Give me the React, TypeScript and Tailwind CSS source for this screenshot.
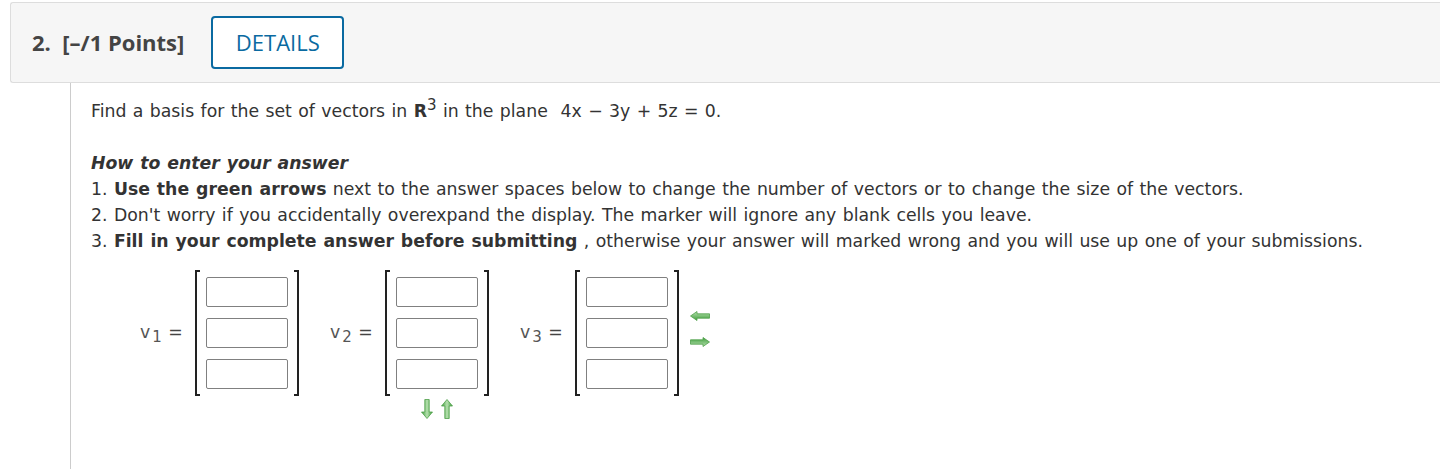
import React from 'react'

const body = { fontFamily: '"DejaVu Sans", Verdana, sans-serif' }
const head = { fontFamily: '"Open Sans", "Segoe UI", sans-serif' }

function ArrowH({ dir }: { dir: 'left' | 'right' }) {
  return (
    <svg width="20" height="10" viewBox="0 0 20 10" className={dir === 'left' ? '' : 'rotate-180'}>
      <defs>
        <linearGradient id={`gh-${dir}`} x1="0" y1="0" x2="0" y2="1">
          <stop offset="0" stopColor="#b5e0ae" />
          <stop offset="1" stopColor="#3f9e3c" />
        </linearGradient>
      </defs>
      <path d="M0.5 5 L7 0.5 L7 2.8 L19.5 2.8 L19.5 7.2 L7 7.2 L7 9.5 Z" fill={`url(#gh-${dir})`} stroke="#4f9f4a" strokeWidth="0.8" />
    </svg>
  )
}

function ArrowV({ dir }: { dir: 'up' | 'down' }) {
  return (
    <svg width="12" height="20" viewBox="0 0 12 20" className={dir === 'up' ? '' : 'rotate-180'}>
      <defs>
        <linearGradient id={`gv-${dir}`} x1="0" y1="0" x2="1" y2="0">
          <stop offset="0" stopColor="#3f9e3c" />
          <stop offset="0.5" stopColor="#b5e0ae" />
          <stop offset="1" stopColor="#3f9e3c" />
        </linearGradient>
      </defs>
      <path d="M6 0.5 L11.5 7 L8.2 7 L8.2 19.5 L3.8 19.5 L3.8 7 L0.5 7 Z" fill={`url(#gv-${dir})`} stroke="#4f9f4a" strokeWidth="0.8" />
    </svg>
  )
}

function Vector({ n }: { n: number }) {
  return (
    <div className="flex items-center">
      <div className="w-[55px] text-[17.3px] text-[#555] leading-none whitespace-nowrap" style={body}>
        v<span className="relative top-[4px] text-[15px] ml-[2px]">{n}</span> <span className="text-[#444]">=</span>
      </div>
      <div className="relative flex flex-col gap-[11px] px-[9px] py-[5px] border-2 border-[#222] w-[104px]">
        <div className="absolute left-[3px] right-[3px] -top-[2px] h-[2px] bg-white" />
        <div className="absolute left-[3px] right-[3px] -bottom-[2px] h-[2px] bg-white" />
        {[0, 1, 2].map((i) => (
          <div key={i} className="w-[82px] h-[30px] border border-[#808080] rounded-[2px] bg-white" />
        ))}
      </div>
    </div>
  )
}

export default function App() {
  return (
    <div className="w-full h-[469px] bg-white overflow-hidden pt-[2px]">
      <div className="ml-[10px] h-[81px] flex items-center border border-r-0 border-[#ddd] rounded-l-[3px] bg-[#f6f6f6]">
        <div className="pl-[21px] text-[22px] font-bold text-[#444]" style={head}>
          2.&nbsp; [–/1 Points]
        </div>
        <div
          className="ml-[27px] w-[133px] h-[53px] flex items-center justify-center border-2 border-[#0a6aa1] rounded-[4px] bg-white text-[22px] text-[#0a6aa1]"
          style={head}
        >
          DETAILS
        </div>
      </div>
      <div
        className="ml-[70px] h-[386px] border-l border-[#ccc] pl-[20px] pt-[16px] text-[#333] text-[17.3px] [word-spacing:0.9px]"
        style={body}
      >
        <p className="leading-[24px]">
          Find a basis for the set of vectors in <b>R</b>
          <span className="relative -top-[7px] text-[15px]">3</span> in the plane&nbsp; 4x − 3y + 5z = 0.
        </p>
        <div className="mt-[26px] leading-[26px]">
          <p className="font-bold italic">How to enter your answer</p>
          <p>
            1. <b>Use the green arrows</b> next to the answer spaces below to change the number of vectors or to change the size of the vectors.
          </p>
          <p>2. Don't worry if you accidentally overexpand the display. The marker will ignore any blank cells you leave.</p>
          <p>
            3. <b>Fill in your complete answer before submitting</b> , otherwise your answer will marked wrong and you will use up one of your submissions.
          </p>
        </div>
        <div className="mt-[16px] ml-[49px] flex items-start">
          <Vector n={1} />
          <div className="ml-[31px] flex flex-col items-center">
            <Vector n={2} />
            <div className="ml-[55px] mt-[3px] flex gap-[8px]">
              <ArrowV dir="down" />
              <ArrowV dir="up" />
            </div>
          </div>
          <div className="ml-[31px] flex items-center self-start">
            <Vector n={3} />
            <div className="ml-[11px] flex flex-col gap-[16px] -mt-[8px]">
              <ArrowH dir="left" />
              <ArrowH dir="right" />
            </div>
          </div>
        </div>
      </div>
    </div>
  )
}
